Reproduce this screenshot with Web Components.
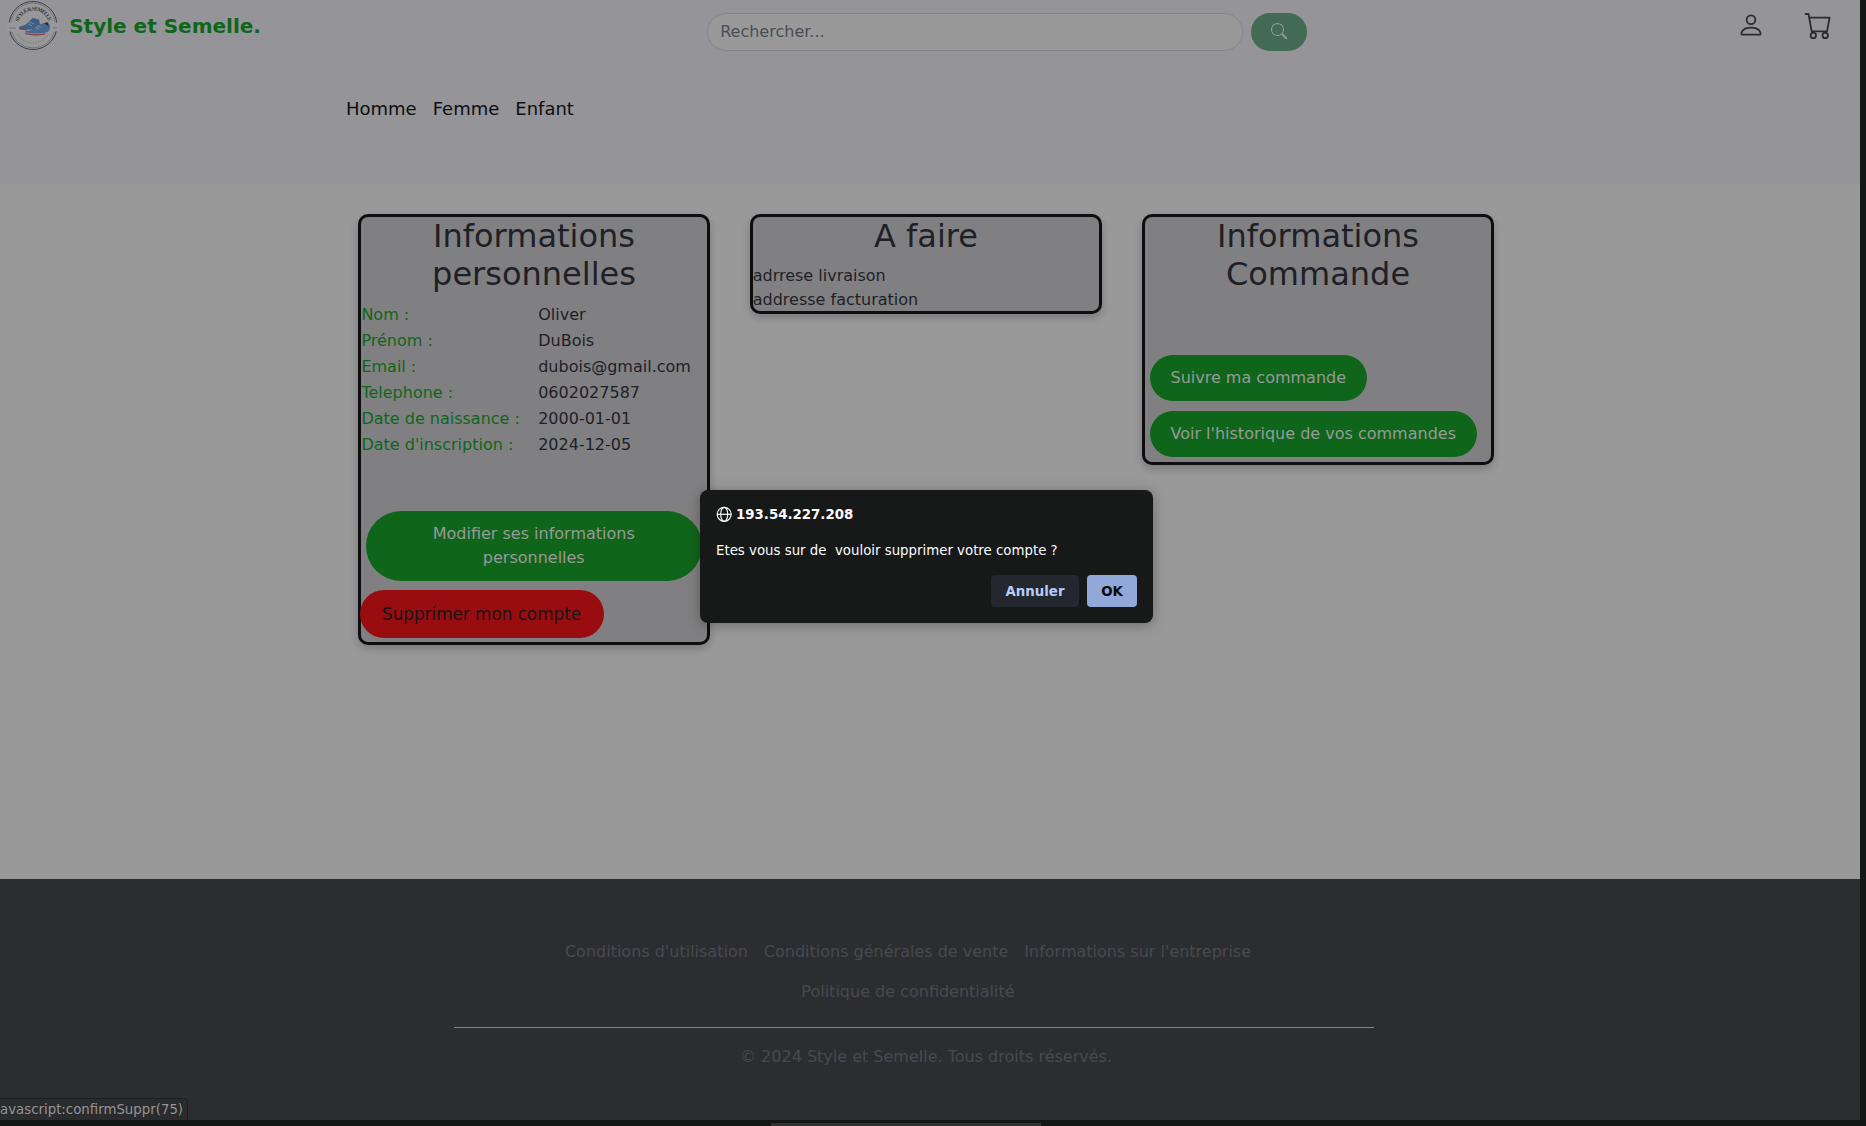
<!DOCTYPE html>
<html lang="fr">
<head>
<meta charset="utf-8">
<title>Style et Semelle</title>
<style>
html,body{margin:0;height:100%;overflow:hidden}
body{background:#151716;font:16px/24px "DejaVu Sans",sans-serif;color:#1f2026}
</style>
</head>
<body>
<shop-app></shop-app>
<script>
const define=(name,html)=>customElements.define(name,class extends HTMLElement{
  constructor(){super();this.attachShadow({mode:'open'}).innerHTML=html;}
});

define('shop-logo',`<style>:host{display:block;width:52px;height:52px}svg{display:block}</style>
<svg width="52" height="52" viewBox="0 0 52 52" fill="none">
<circle cx="26" cy="25.500" r="24" fill="#98989a" stroke="#3c3e46" stroke-width="1"/>
<circle cx="26" cy="25.500" r="22.300" stroke="#62646b" stroke-width=".7"/>
<path d="M0 22.500h52v9H0z" fill="#98989a"/>
<path d="M2 28h7M46 28h4" stroke="#6e7076" stroke-width="1.200"/>
<path id="arc" d="M11.500 22A15.500 15.500 0 0 1 41.500 22"/>
<text font-family="Liberation Serif,serif" font-weight="700" font-size="5.500" fill="#34363e"><textPath href="#arc" textLength="40">STYLE &amp; SEMELLE</textPath></text>
<path d="M11 34A17 17 0 0 0 41 34" stroke="#808287" stroke-width="1.800" stroke-dasharray="1.200 1.400"/>
<path d="M13 26.500c6-1 8-4 11-7 2-2 3-2 4-1l4 1 1 5-3 5-15 0c-3 0-4-2-2-3z" fill="#3f5f84"/>
<path d="M12 28.500l8 1.500" stroke="#8f3538" stroke-width="1"/>
<path d="M19 31c5 0 8-3 12-6l6-2 4-1c3 4 2 6 1 9l-5 3-17-1c-2 0-3-1-1-2z" fill="#46698f"/>
<path d="M37.500 23l3-.5 1.500 4.500z" fill="#24252c"/>
<path d="M18 32.500c7 2 16 2 22 0" stroke="#85868c" stroke-width="1"/>
<path d="M18 33.500c7 2 14 1.500 20 .5" stroke="#91363a" stroke-width="1.200"/>
<path d="M22 22l5 2M21 24l4 2M28 27l4 2M30 25.500l4 2" stroke="#7f95b0" stroke-width=".8"/>
</svg>`);

define('search-bar',`<style>
:host{display:flex;gap:8px;height:38px}
.field{box-sizing:border-box;width:536px;height:38px;border:1px solid #85848c;border-radius:20px;background:#99999a;padding:6px 12px;color:#4a4d57;line-height:24px}
button{all:unset;width:56px;height:38px;border-radius:20px;background:#436b54;display:flex;align-items:center;justify-content:center;color:#99999a}
svg{margin-top:-2px}
</style><div class="field">Rechercher...</div>
<button aria-label="Rechercher"><svg width="16" height="16" viewBox="0 0 16 16" fill="currentColor"><path d="M11.742 10.344a6.500 6.500 0 1 0-1.397 1.398h-.001c.03.04.062.078.098.115l3.850 3.850a1 1 0 0 0 1.415-1.414l-3.850-3.850a1.007 1.007 0 0 0-.115-.1zM12 6.500a5.500 5.500 0 1 1-11 0 5.500 5.500 0 0 1 11 0z"/></svg></button>`);

define('shop-header',`<style>
:host{display:block;height:184px;background:#959499}
.top{display:flex;height:53px;align-items:flex-start}
shop-logo{margin:0 0 0 7px}
b{margin-left:10.200px;font-size:20px;line-height:30px;margin-top:11px;width:638px;color:#0f661a}
search-bar{margin-top:13px}
.icons{margin-left:auto;display:flex;padding:11px 28px 0 0;gap:39px;color:#2a2a30}
nav{display:flex;gap:16px;padding:42px 0 0 346px;font-size:18px;line-height:27px;color:#0e0e10}
</style>
<div class="top"><shop-logo></shop-logo><b>Style et Semelle.</b><search-bar></search-bar>
<div class="icons">
<svg width="28" height="28" viewBox="0 0 16 16" fill="currentColor"><path d="M8 8a3 3 0 1 0 0-6 3 3 0 0 0 0 6zm2-3a2 2 0 1 1-4 0 2 2 0 0 1 4 0zm4 8c0 1-1 1-1 1H3s-1 0-1-1 1-4 6-4 6 3 6 4zm-1-.004c-.001-.246-.154-.986-.832-1.664C11.516 10.680 10.289 10 8 10c-2.290 0-3.516.680-4.168 1.332-.678.678-.83 1.418-.832 1.664h10z"/></svg>
<svg width="28" height="28" viewBox="0 0 28 28" fill="none" stroke="currentColor" stroke-width="1.800" stroke-linecap="round" stroke-linejoin="round"><path d="M1.700 3h2.800l3.200 17.300H23l2.600-13.600H5.200"/><circle cx="9.300" cy="24.400" r="2.700"/><circle cx="21.200" cy="24.400" r="2.700"/></svg>
</div></div>
<nav><span>Homme</span><span>Femme</span><span>Enfant</span></nav>`);

define('info-card',`<style>
:host{display:block;box-sizing:border-box;width:352px;border:3px solid #0e0e10;border-radius:10px;background:#808082;box-shadow:0 4px 8px rgba(0,0,0,.2)}
h2{margin:0 0 8px;font-weight:400;font-size:32px;line-height:38.400px;text-align:center}
</style><h2><slot name="title"></slot></h2><slot></slot>`);

define('info-row',`<style>
:host{display:flex;height:26px;line-height:24px;padding:1px 0 0 .4px;box-sizing:border-box;white-space:nowrap}
.k{width:176.800px;color:#0f661a}
</style><span class="k"><slot name="label"></slot></span><span><slot></slot></span>`);

define('pill-button',`<style>
:host{display:block;box-sizing:border-box;width:fit-content;margin:0 5px 10px;padding:11px 21px 11px 20.500px;border-radius:35px;background:#0f661a;color:#99999a;text-align:center}
:host([danger]){background:#990d10;color:#151516;font-size:16.800px;line-height:26px;margin:0 0 4px -1px;padding:11px 23px 11px 22px}
</style><slot></slot>`);

define('shop-footer',`<style>
:host{display:flex;flex-direction:column;height:241px;background:#2c2d31;color:#484a50}
.links{display:flex;flex-wrap:wrap;justify-content:center;gap:16px;margin:61px 0 0 554px;width:708px}
hr{border:0;height:1px;width:920px;background:#828385;margin:23px 0 17px 454px}
p{margin:0 0 0 740px}
</style><div class="links"><span>Conditions d'utilisation</span><span>Conditions générales de vente</span><span>Informations sur l'entreprise</span><span>Politique de confidentialité</span></div>
<hr><p>© 2024 Style et Semelle. Tous droits réservés.</p>`);

define('confirm-dialog',`<style>
:host{position:absolute;left:700px;top:490px;width:453px;height:133px;box-sizing:border-box;border-radius:8px;background:#171918;color:#fbfbfe;padding:16px;font-size:13.333px;line-height:16px;box-shadow:0 2px 14px rgba(0,0,0,.3)}
.h{display:flex;align-items:flex-start;gap:4px;height:16px;font-weight:700;font-size:13.333px}
.h span{padding-top:1px}
p{margin:21px 0 16px;white-space:pre}
.b{display:flex;justify-content:flex-end;gap:8px}
button{all:unset;box-sizing:border-box;height:32px;line-height:32px;padding-top:1px;border-radius:4px;background:#25272f;color:#b5ccfb;font-weight:700;width:88px;text-align:center;display:block}
.ok{background:#91a8d9;color:#080808;width:50px}
</style><div class="h"><svg width="16" height="16" viewBox="0 0 16 16" fill="none" stroke="currentColor" stroke-width="1.200"><circle cx="8.200" cy="8.300" r="7"/><ellipse cx="8.200" cy="8.300" rx="3.500" ry="7"/><path d="M1.200 8.300h14"/></svg><span>193.54.227.208</span></div>
<p>Etes vous sur de  vouloir supprimer votre compte ?</p>
<div class="b"><button>Annuler</button><button class="ok">OK</button></div>`);

define('status-hint',`<style>
:host{position:absolute;left:0;top:1098px;width:188px;height:22px;box-sizing:border-box;border:solid #1d1e20;border-width:1px 1px 0 0;border-radius:0 4px 0 0;background:#2a2b2d;color:#949496;font-size:13.333px;line-height:21px;white-space:nowrap}
</style><slot></slot>`);

define('scroll-thumb',`<style>:host{display:block;width:270px;height:3px;margin:3px 0 0 771px;background:#343233}</style>`);

define('shop-app',`<style>
:host{display:block;position:relative;height:1126px;overflow:hidden}
.page{width:1860px;background:#99999a}
main{display:flex;align-items:flex-start;gap:40px;height:695px;box-sizing:border-box;padding:30px 0 0 358px}
.s1{height:53px}.s2{height:53px}
.todo{padding-top:1px;margin:0 0 -1px -.3px}
</style>
<div class="page"><shop-header></shop-header>
<main>
<info-card><span slot="title">Informations<br>personnelles</span>
<info-row><span slot="label">Nom :</span>Oliver</info-row>
<info-row><span slot="label">Prénom :</span>DuBois</info-row>
<info-row><span slot="label">Email :</span>dubois@gmail.com</info-row>
<info-row><span slot="label">Telephone :</span>0602027587</info-row>
<info-row><span slot="label">Date de naissance :</span>2000-01-01</info-row>
<info-row><span slot="label">Date d'inscription :</span>2024-12-05</info-row>
<div class="s1"></div>
<pill-button style="width:336px;margin-bottom:9px">Modifier ses informations<br>personnelles</pill-button>
<pill-button danger>Supprimer mon compte</pill-button>
</info-card>
<info-card><span slot="title">A faire</span><div class="todo"><div>adrrese livraison</div><div>addresse facturation</div></div></info-card>
<info-card><span slot="title">Informations<br>Commande</span>
<div class="s2"></div>
<pill-button>Suivre ma commande</pill-button>
<pill-button style="margin-bottom:5px">Voir l'historique de vos commandes</pill-button>
</info-card>
</main>
<shop-footer></shop-footer></div>
<scroll-thumb></scroll-thumb>
<confirm-dialog></confirm-dialog>
<status-hint>avascript:confirmSuppr(75)</status-hint>`);
</script>
</body>
</html>
